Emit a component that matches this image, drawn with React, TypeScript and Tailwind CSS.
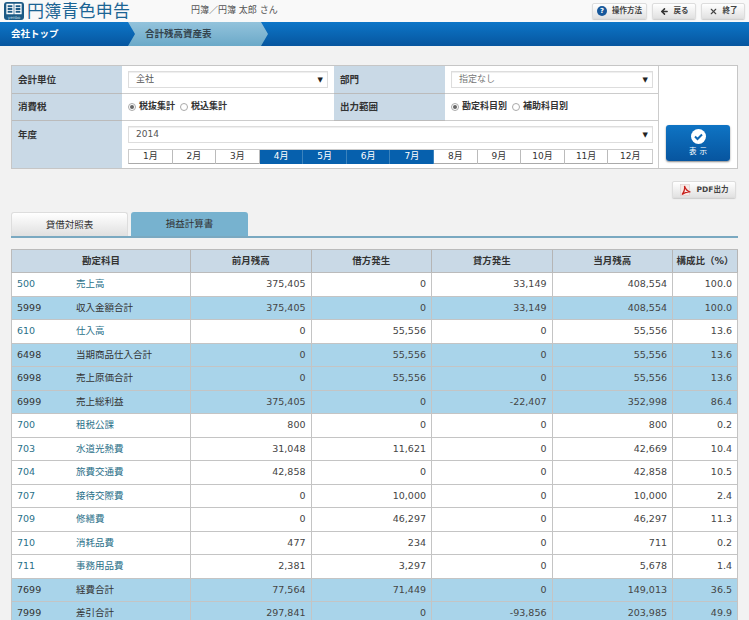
import { ArrowLeft, X } from "lucide-react";

const jp = "font-['DejaVu_Sans','Noto_Sans_CJK_JP',sans-serif]";

const rows = [
  ["500", "売上高", "375,405", "0", "33,149", "408,554", "100.0", 0],
  ["5999", "収入金額合計", "375,405", "0", "33,149", "408,554", "100.0", 1],
  ["610", "仕入高", "0", "55,556", "0", "55,556", "13.6", 0],
  ["6498", "当期商品仕入合計", "0", "55,556", "0", "55,556", "13.6", 1],
  ["6998", "売上原価合計", "0", "55,556", "0", "55,556", "13.6", 1],
  ["6999", "売上総利益", "375,405", "0", "-22,407", "352,998", "86.4", 1],
  ["700", "租税公課", "800", "0", "0", "800", "0.2", 0],
  ["703", "水道光熱費", "31,048", "11,621", "0", "42,669", "10.4", 0],
  ["704", "旅費交通費", "42,858", "0", "0", "42,858", "10.5", 0],
  ["707", "接待交際費", "0", "10,000", "0", "10,000", "2.4", 0],
  ["709", "修繕費", "0", "46,297", "0", "46,297", "11.3", 0],
  ["710", "消耗品費", "477", "234", "0", "711", "0.2", 0],
  ["711", "事務用品費", "2,381", "3,297", "0", "5,678", "1.4", 0],
  ["7699", "経費合計", "77,564", "71,449", "0", "149,013", "36.5", 1],
  ["7999", "差引合計", "297,841", "0", "-93,856", "203,985", "49.9", 1],
] as const;

const months = ["1月", "2月", "3月", "4月", "5月", "6月", "7月", "8月", "9月", "10月", "11月", "12月"];
const selected = ["4月", "5月", "6月", "7月"];

function Radio({ on, label }: { on?: boolean; label: string }) {
  return (
    <span className="flex items-center gap-[3px]">
      <span className="flex h-[8px] w-[8px] items-center justify-center rounded-full border border-[#aaa] bg-white">
        {on && <span className="h-[4px] w-[4px] rounded-full bg-[#666]" />}
      </span>
      <span className="text-[9px] font-bold text-[#333]">{label}</span>
    </span>
  );
}

function Select({ value, muted }: { value: string; muted?: boolean }) {
  return (
    <div className="flex h-[17px] items-center justify-between border border-[#ddd] bg-white pl-[7px] pr-[4px] pt-[1px] shadow-[inset_0_1px_1px_#eee]">
      <span className={`text-[9px] ${muted ? "text-[#777]" : "text-[#555]"}`}>{value}</span>
      <span className="text-[7px] text-[#222]">▼</span>
    </div>
  );
}

function TopButton({ icon, label, className }: { icon: React.ReactNode; label: string; className: string }) {
  return (
    <div className={`flex h-[16px] items-center justify-center gap-[5px] rounded-[2px] border border-[#ddd] bg-gradient-to-b from-white to-[#e2e2e2] text-[7.5px] font-bold text-[#444] shadow-[0_1px_1px_#ccc] ${className}`}>
      {icon}
      <span>{label}</span>
    </div>
  );
}

export default function App() {
  return (
    <div className={`h-[620px] w-[749px] overflow-hidden bg-[#f2f2f2] ${jp}`}>
      {/* Header */}
      <div className="flex h-[22px] items-center bg-[#f9f9f9] pl-[4px]">
        <svg width="20" height="18" viewBox="0 0 20 18" className="mb-[1px]">
          <rect width="20" height="18" rx="3" fill="#1d5a85" />
          <path d="M3 2.500h6v9H3zM11 2.500h6v9h-6z" fill="none" stroke="#fff" strokeWidth="1.3" />
          <path d="M3 5.500h6M3 8.500h6M11 5.500h6M11 8.500h6" stroke="#fff" strokeWidth="0.8" />
          <text x="10" y="16.500" textAnchor="middle" fontSize="4" fill="#cfe3ee">yenbo</text>
        </svg>
        <span className="ml-[3px] w-[104px] text-[17px] leading-none tracking-[0.2px] text-[#1b6494]">円簿青色申告</span>
        <span className="ml-[60px] text-[9px] text-[#555]">円簿／円簿 太郎 さん</span>
        <div className="ml-auto mr-[4px] flex gap-[5px]">
          <TopButton
            className="w-[55px]"
            label="操作方法"
            icon={<span className="flex h-[10px] w-[10px] items-center justify-center rounded-full bg-[#17589b] text-[7px] font-bold text-white">?</span>}
          />
          <TopButton className="w-[44px]" label="戻る" icon={<ArrowLeft size={9} strokeWidth={4} className="text-[#333]" />} />
          <TopButton className="w-[44px]" label="終了" icon={<X size={9} strokeWidth={3} className="text-[#444]" />} />
        </div>
      </div>

      {/* Breadcrumb */}
      <div className="flex h-[24px] bg-gradient-to-b from-[#0d76c8] to-[#07569f]">
        <div className="flex w-[128px] items-center pl-[11px] text-[9.5px] font-bold text-white">会社トップ</div>
        <div className="flex w-[140px] items-center bg-gradient-to-b from-[#93c3dc] to-[#6ba9c8] pl-[17px] text-[9.5px] font-bold text-[#33434d] [clip-path:polygon(0_0,133px_0,100%_50%,133px_100%,0_100%,7px_50%)]">
          合計残高資産表
        </div>
      </div>

      {/* Filter panel */}
      <div className="ml-[11px] mt-[19px] grid w-[727px] grid-cols-[110px_212px_111px_213px_79px] grid-rows-[28px_27px_47px] border border-[#c6c6c6] bg-white text-[9.5px]">
        <div className="flex items-center border-b border-[#bbb] bg-[#c9d9e6] pl-[6px] pt-[1px] font-bold text-[#333]">会計単位</div>
        <div className="border-b border-[#ccc] pl-[6px] pr-[6px] pt-[5px]">
          <Select value="全社" />
        </div>
        <div className="flex items-center border-b border-[#bbb] bg-[#c9d9e6] pl-[6px] pt-[1px] font-bold text-[#333]">部門</div>
        <div className="border-b border-[#ccc] pl-[6px] pr-[5px] pt-[5px]">
          <Select value="指定なし" muted />
        </div>
        <div className="row-span-3 flex flex-col justify-end border-l border-[#ccc] pb-[7px] pl-[7px] pr-[7px]">
          <div className="flex h-[36px] flex-col items-center justify-center gap-[2px] rounded-[3px] bg-gradient-to-b from-[#0f74c4] to-[#07559f] shadow-[0_1px_2px_#888]">
            <svg width="15" height="15" viewBox="0 0 15 15">
              <circle cx="7.5" cy="7.5" r="7.5" fill="#fff" />
              <path d="M4 7.5l2.5 2.5 4.5-4.5" fill="none" stroke="#0f69b5" strokeWidth="2" />
            </svg>
            <span className="pl-[3px] text-[7.5px] tracking-[3px] text-white">表示</span>
          </div>
        </div>
        <div className="flex items-center border-b border-[#bbb] bg-[#c9d9e6] pl-[6px] pt-[1px] font-bold text-[#333]">消費税</div>
        <div className="flex items-center gap-[5px] border-b border-[#ccc] pl-[6px]">
          <Radio on label="税抜集計" />
          <Radio label="税込集計" />
        </div>
        <div className="flex items-center border-b border-[#bbb] bg-[#c9d9e6] pl-[6px] pt-[1px] font-bold text-[#333]">出力範囲</div>
        <div className="flex items-center gap-[5px] border-b border-[#ccc] pl-[6px]">
          <Radio on label="勘定科目別" />
          <Radio label="補助科目別" />
        </div>
        <div className="bg-[#c9d9e6] pl-[6px] pt-[7px] font-bold text-[#333]">年度</div>
        <div className="col-span-3 pl-[6px] pr-[5px] pt-[5px]">
          <Select value="2014" />
          <div className="mt-[6px] grid h-[15px] grid-cols-12 border border-[#ccc] border-b-[#aaa]">
            {months.map((m) =>
              selected.includes(m) ? (
                <div key={m} className="flex items-center justify-center border-r border-[#3b83bd] bg-[#0660ad] text-[9px] text-white">{m}</div>
              ) : (
                <div key={m} className="flex items-center justify-center border-r border-[#bbb] text-[9px] text-[#333] last:border-r-0">{m}</div>
              ),
            )}
          </div>
        </div>
      </div>

      {/* PDF button */}
      <div className="mr-[13px] mt-[12px] flex justify-end">
        <div className="flex h-[17px] w-[64px] items-center justify-center gap-[5px] rounded-[2px] border border-[#ddd] bg-gradient-to-b from-white to-[#e2e2e2] text-[7.5px] font-bold text-[#444] shadow-[0_1px_1px_#ccc]">
          <svg width="12" height="12" viewBox="0 0 12 12">
            <rect x="0.5" y="0.5" width="9" height="11" fill="#f7e9e6" stroke="#dcc" strokeWidth="0.6" />
            <path d="M2 10.500C4 8 5 5 4.500 2c1 3 3 5.500 6 6-3-.5-6 .5-8.500 2.500z" fill="none" stroke="#c8201c" strokeWidth="1.200" />
          </svg>
          <span>PDF出力</span>
        </div>
      </div>

      {/* Tabs */}
      <div className="ml-[11px] mt-[14px] flex h-[26px] w-[727px] gap-[3px] border-b-2 border-[#7aa9c1]">
        <div className="flex h-[24px] w-[117px] items-center justify-center rounded-t-[3px] border border-b-0 border-[#ddd] bg-gradient-to-b from-white to-[#e0e0e0] pt-[1px] text-[9.5px] text-[#333]">貸借対照表</div>
        <div className="flex h-[24px] w-[117px] items-center justify-center rounded-t-[3px] bg-[#77b2cf] pt-[1px] text-[9.5px] text-[#333]">損益計算書</div>
      </div>

      {/* Table */}
      <div className="ml-[11px] mt-[11px] w-[727px] text-[9.5px]">
        <div className="flex h-[24px] border-y border-l border-[#bbb] bg-[#c9d9e6] font-bold text-[#333]">
          <div className="flex w-[179px] items-center justify-center border-r border-[#b5b5b5]">勘定科目</div>
          {["前月残高", "借方発生", "貸方発生", "当月残高"].map((h) => (
            <div key={h} className="flex w-[120.500px] items-center justify-center border-r border-[#b5b5b5]">{h}</div>
          ))}
          <div className="flex flex-1 items-center justify-center border-r border-[#b5b5b5]">構成比（%）</div>
        </div>
        {rows.map((r) => {
          const total = r[7] === 1;
          const name = total ? "text-[#333]" : "text-[#2a7089]";
          return (
            <div key={r[0]} className={`flex h-[23.500px] border-b border-l border-[#c4c4c4] text-[#444] ${total ? "bg-[#a9d4ea]" : "bg-white"}`}>
              <div className={`flex w-[179px] items-center border-r border-[#c4c4c4] pl-[5px] ${name}`}>
                <span className="w-[59px]">{r[0]}</span>
                <span>{r[1]}</span>
              </div>
              {[r[2], r[3], r[4], r[5]].map((v, i) => (
                <div key={i} className="flex w-[120.500px] items-center justify-end border-r border-[#c4c4c4] pr-[5px]">{v}</div>
              ))}
              <div className="flex flex-1 items-center justify-end border-r border-[#c4c4c4] pr-[5px]">{r[6]}</div>
            </div>
          );
        })}
      </div>
    </div>
  );
}
